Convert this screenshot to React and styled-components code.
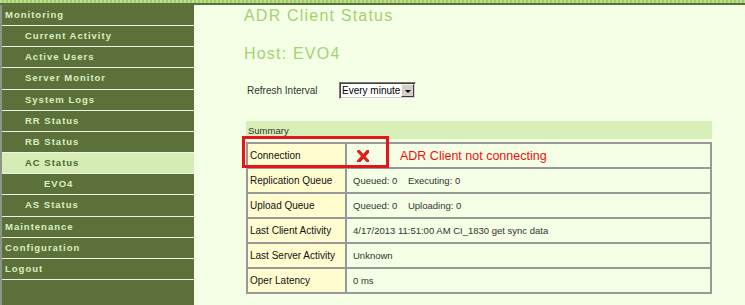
import React from "react";
import styled, { createGlobalStyle } from "styled-components";

const GlobalStyle = createGlobalStyle`
  html, body { margin: 0; padding: 0; background: #f5ffe5; }
  body { font-family: "Liberation Sans", Arial, sans-serif; }
`;

const Page = styled.div`
  display: flex;
  flex-direction: column;
  min-height: 100vh;
`;

const TopStripe = styled.div`
  flex: none;
  height: 3px;
  background: repeating-linear-gradient(90deg, #bce08f 0 2px, #9fcb69 2px 4px);
  border-bottom: 2px solid #5b7139;
`;

const Body = styled.div`
  display: flex;
  flex: 1;
`;

const Sidebar = styled.nav`
  flex: none;
  width: 192px;
  background: #5b7139;
  border-left: 2px solid #8e9488;
`;

const NavItem = styled.div`
  height: 20.17px;
  font: bold 9.5px "Liberation Sans", Arial, sans-serif;
  line-height: 20px;
  letter-spacing: 1px;
  border-bottom: 1px solid #eef4e2;
  padding-left: ${(p) => [3, 23, 42][p.$level]}px;
  background: ${(p) => (p.$active ? "#d5ecb5" : "transparent")};
  color: ${(p) => (p.$active ? "#4e6630" : "#dcefc2")};
  white-space: nowrap;
`;

const Main = styled.main`
  flex: 1;
  padding: 1px 0 0 50px;
`;

const PageTitle = styled.h1`
  margin: 0;
  font: normal 16px/20px "Liberation Sans", Arial, sans-serif;
  letter-spacing: 1.2px;
  color: #a3d273;
`;

const HostTitle = styled(PageTitle).attrs({ as: "h2" })`
  margin-top: 18px;
`;

const RefreshRow = styled.div`
  margin-top: 18px;
  display: flex;
  align-items: center;
  height: 17px;
  padding-left: 3px;
`;

const FieldLabel = styled.span`
  width: 92px;
  font-size: 10px;
  color: #333;
`;

const SelectBox = styled.div`
  box-sizing: border-box;
  width: 77px;
  height: 17px;
  display: flex;
  align-items: center;
  border: 1px solid;
  border-color: #7a7a7a #ffffff #ffffff #7a7a7a;
  box-shadow: inset 1px 1px 0 #404040, inset -1px -1px 0 #d4d0c8;
  background: #fff;
  font-size: 10px;
  color: #000;
  padding-left: 2px;
  white-space: nowrap;
`;

const SelectText = styled.span`
  flex: none;
`;

const ArrowButton = styled.span`
  box-sizing: border-box;
  flex: none;
  margin-left: auto;
  margin-right: 1px;
  width: 13px;
  height: 13px;
  background: #d4d0c8;
  border: 1px solid;
  border-color: #f4f4f4 #404040 #404040 #f4f4f4;
  display: flex;
  align-items: center;
  justify-content: center;
  &::after {
    content: "";
    width: 0;
    height: 0;
    border-left: 3px solid transparent;
    border-right: 3px solid transparent;
    border-top: 3px solid #000;
    margin-top: 2px;
  }
`;

const SummaryWrap = styled.section`
  position: relative;
  margin: 22px 0 0 2px;
  width: 466px;
`;

const SummaryBar = styled.div`
  height: 18px;
  line-height: 19px;
  background: #d8efb7;
  font-size: 9.5px;
  color: #333;
  padding-left: 2px;
`;

const StatusTable = styled.table`
  margin-top: 3px;
  width: 466px;
  border-collapse: separate;
  border-spacing: 0;
  border: 1px solid #999;
`;

const LabelCell = styled.td`
  box-sizing: border-box;
  width: 99px;
  height: 25px;
  padding: 0 2px;
  border: 1px solid #999;
  background: #fffdd0;
  font-size: 10px;
  color: #111;
  white-space: nowrap;
`;

const ValueCell = styled.td`
  box-sizing: border-box;
  height: 25px;
  padding: 0 6px;
  border: 1px solid #999;
  font-size: 9.5px;
  color: #333;
  white-space: nowrap;
`;

const ConnectionValue = styled.span`
  display: flex;
  align-items: center;
`;

const ErrorIcon = styled.svg`
  margin-left: 4px;
  flex: none;
`;

const ErrorText = styled.span`
  margin-left: 31px;
  font-size: 12.5px;
  color: #f01010;
`;

const Highlight = styled.div`
  position: absolute;
  left: -4px;
  top: 15px;
  width: 147px;
  height: 32px;
  box-sizing: border-box;
  border: 3px solid #e8141b;
  pointer-events: none;
`;

const nav = [
  { label: "Monitoring", level: 0 },
  { label: "Current Activity", level: 1 },
  { label: "Active Users", level: 1 },
  { label: "Server Monitor", level: 1 },
  { label: "System Logs", level: 1 },
  { label: "RR Status", level: 1 },
  { label: "RB Status", level: 1 },
  { label: "AC Status", level: 1, active: true },
  { label: "EVO4", level: 2 },
  { label: "AS Status", level: 1 },
  { label: "Maintenance", level: 0 },
  { label: "Configuration", level: 0 },
  { label: "Logout", level: 0 },
];

const gap = "\u00a0\u00a0\u00a0 ";

const rows = [
  { label: "Replication Queue", value: `Queued: 0${gap}Executing: 0` },
  { label: "Upload Queue", value: `Queued: 0${gap}Uploading: 0` },
  { label: "Last Client Activity", value: "4/17/2013 11:51:00 AM CI_1830 get sync data" },
  { label: "Last Server Activity", value: "Unknown" },
  { label: "Oper Latency", value: "0 ms" },
];

function CrossIcon() {
  return (
    <ErrorIcon width="12" height="12" viewBox="0 0 12 12">
      <path d="M1.5 1.2 L10.8 11" stroke="#9c0c0c" strokeWidth="2.8" strokeLinecap="square" transform="translate(0.5 0.5)" />
      <path d="M10.6 1 L1.4 11" stroke="#9c0c0c" strokeWidth="2.8" strokeLinecap="square" transform="translate(0.5 0.5)" />
      <path d="M1.5 1.2 L10.8 11" stroke="#ee1c1c" strokeWidth="2.6" strokeLinecap="square" />
      <path d="M10.6 1 L1.4 11" stroke="#ee1c1c" strokeWidth="2.6" strokeLinecap="square" />
    </ErrorIcon>
  );
}

export default function App() {
  return (
    <>
      <GlobalStyle />
      <Page>
        <TopStripe />
        <Body>
          <Sidebar>
            {nav.map((n) => (
              <NavItem key={n.label} $level={n.level} $active={n.active}>
                {n.label}
              </NavItem>
            ))}
          </Sidebar>
          <Main>
            <PageTitle>ADR Client Status</PageTitle>
            <HostTitle>Host: EVO4</HostTitle>
            <RefreshRow>
              <FieldLabel>Refresh Interval</FieldLabel>
              <SelectBox>
                <SelectText>Every minute</SelectText>
                <ArrowButton />
              </SelectBox>
            </RefreshRow>
            <SummaryWrap>
              <SummaryBar>Summary</SummaryBar>
              <StatusTable>
                <tbody>
                  <tr>
                    <LabelCell>Connection</LabelCell>
                    <ValueCell>
                      <ConnectionValue>
                        <CrossIcon />
                        <ErrorText>ADR Client not connecting</ErrorText>
                      </ConnectionValue>
                    </ValueCell>
                  </tr>
                  {rows.map((r) => (
                    <tr key={r.label}>
                      <LabelCell>{r.label}</LabelCell>
                      <ValueCell>{r.value}</ValueCell>
                    </tr>
                  ))}
                </tbody>
              </StatusTable>
              <Highlight />
            </SummaryWrap>
          </Main>
        </Body>
      </Page>
    </>
  );
}
